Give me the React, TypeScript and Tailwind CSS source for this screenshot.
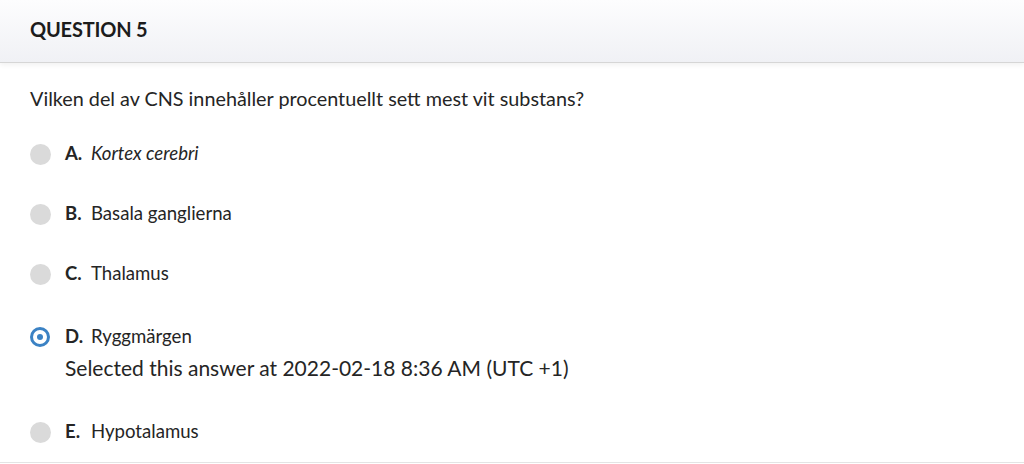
import React from 'react';

type Option = { letter: string; text: string; italic?: boolean; selected?: boolean };

const options: Option[] = [
  { letter: 'A.', text: 'Kortex cerebri', italic: true },
  { letter: 'B.', text: 'Basala ganglierna' },
  { letter: 'C.', text: 'Thalamus' },
  { letter: 'D.', text: 'Ryggmärgen', selected: true },
  { letter: 'E.', text: 'Hypotalamus' },
];

function Radio({ selected }: { selected?: boolean }) {
  if (selected) {
    return (
      <span className="flex h-[20px] w-[20px] shrink-0 items-center justify-center rounded-full border-[3px] border-[#3b82c4] bg-white">
        <span className="h-[6px] w-[6px] rounded-full bg-[#3b82c4]" />
      </span>
    );
  }
  return <span className="h-[21px] w-[21px] shrink-0 rounded-full bg-[#dadada]" />;
}

export default function App() {
  return (
    <div className="h-[464px] w-[1024px] overflow-hidden bg-white text-[#252525]" style={{ fontFamily: 'Lato, "Noto Sans", sans-serif' }}>
      <div className="relative z-10 flex h-[63px] items-center border-b border-[#d6d6d6] bg-gradient-to-b from-[#fdfdfe] to-[#f0f1f5] px-[30px] pb-[5px] shadow-[0_2px_5px_rgba(0,0,0,0.06)]">
        <h2 className="text-[20px] font-bold leading-none tracking-[-0.2px] text-[#1c1c1c]">QUESTION 5</h2>
      </div>
      <div className="h-[400px] border-b border-[#e4e4e4] px-[30px] pt-[23px]">
        <p className="text-[19.8px] leading-[24px]">Vilken del av CNS innehåller procentuellt sett mest vit substans?</p>
        <div className="mt-[32px] flex flex-col">
          {options.map((o, i) => (
            <div
              key={o.letter}
              className={i === 0 ? '' : i === 3 ? 'mt-[39px]' : i === 4 ? 'mt-[38px]' : 'mt-[36px]'}
            >
              <div className="flex h-[24px] items-center">
                <span className="flex w-[35px] items-center">
                  <Radio selected={o.selected} />
                </span>
                <span className="w-[26px] text-[18.5px] font-bold">{o.letter}</span>
                <span className={`text-[18.6px] ${o.italic ? 'italic' : ''}`}>{o.text}</span>
              </div>
              {o.selected && (
                <div className="ml-[35px] mt-[5px] text-[21px] leading-[28px]">
                  Selected this answer at 2022-02-18 8:36 AM (UTC +1)
                </div>
              )}
            </div>
          ))}
        </div>
      </div>
    </div>
  );
}
